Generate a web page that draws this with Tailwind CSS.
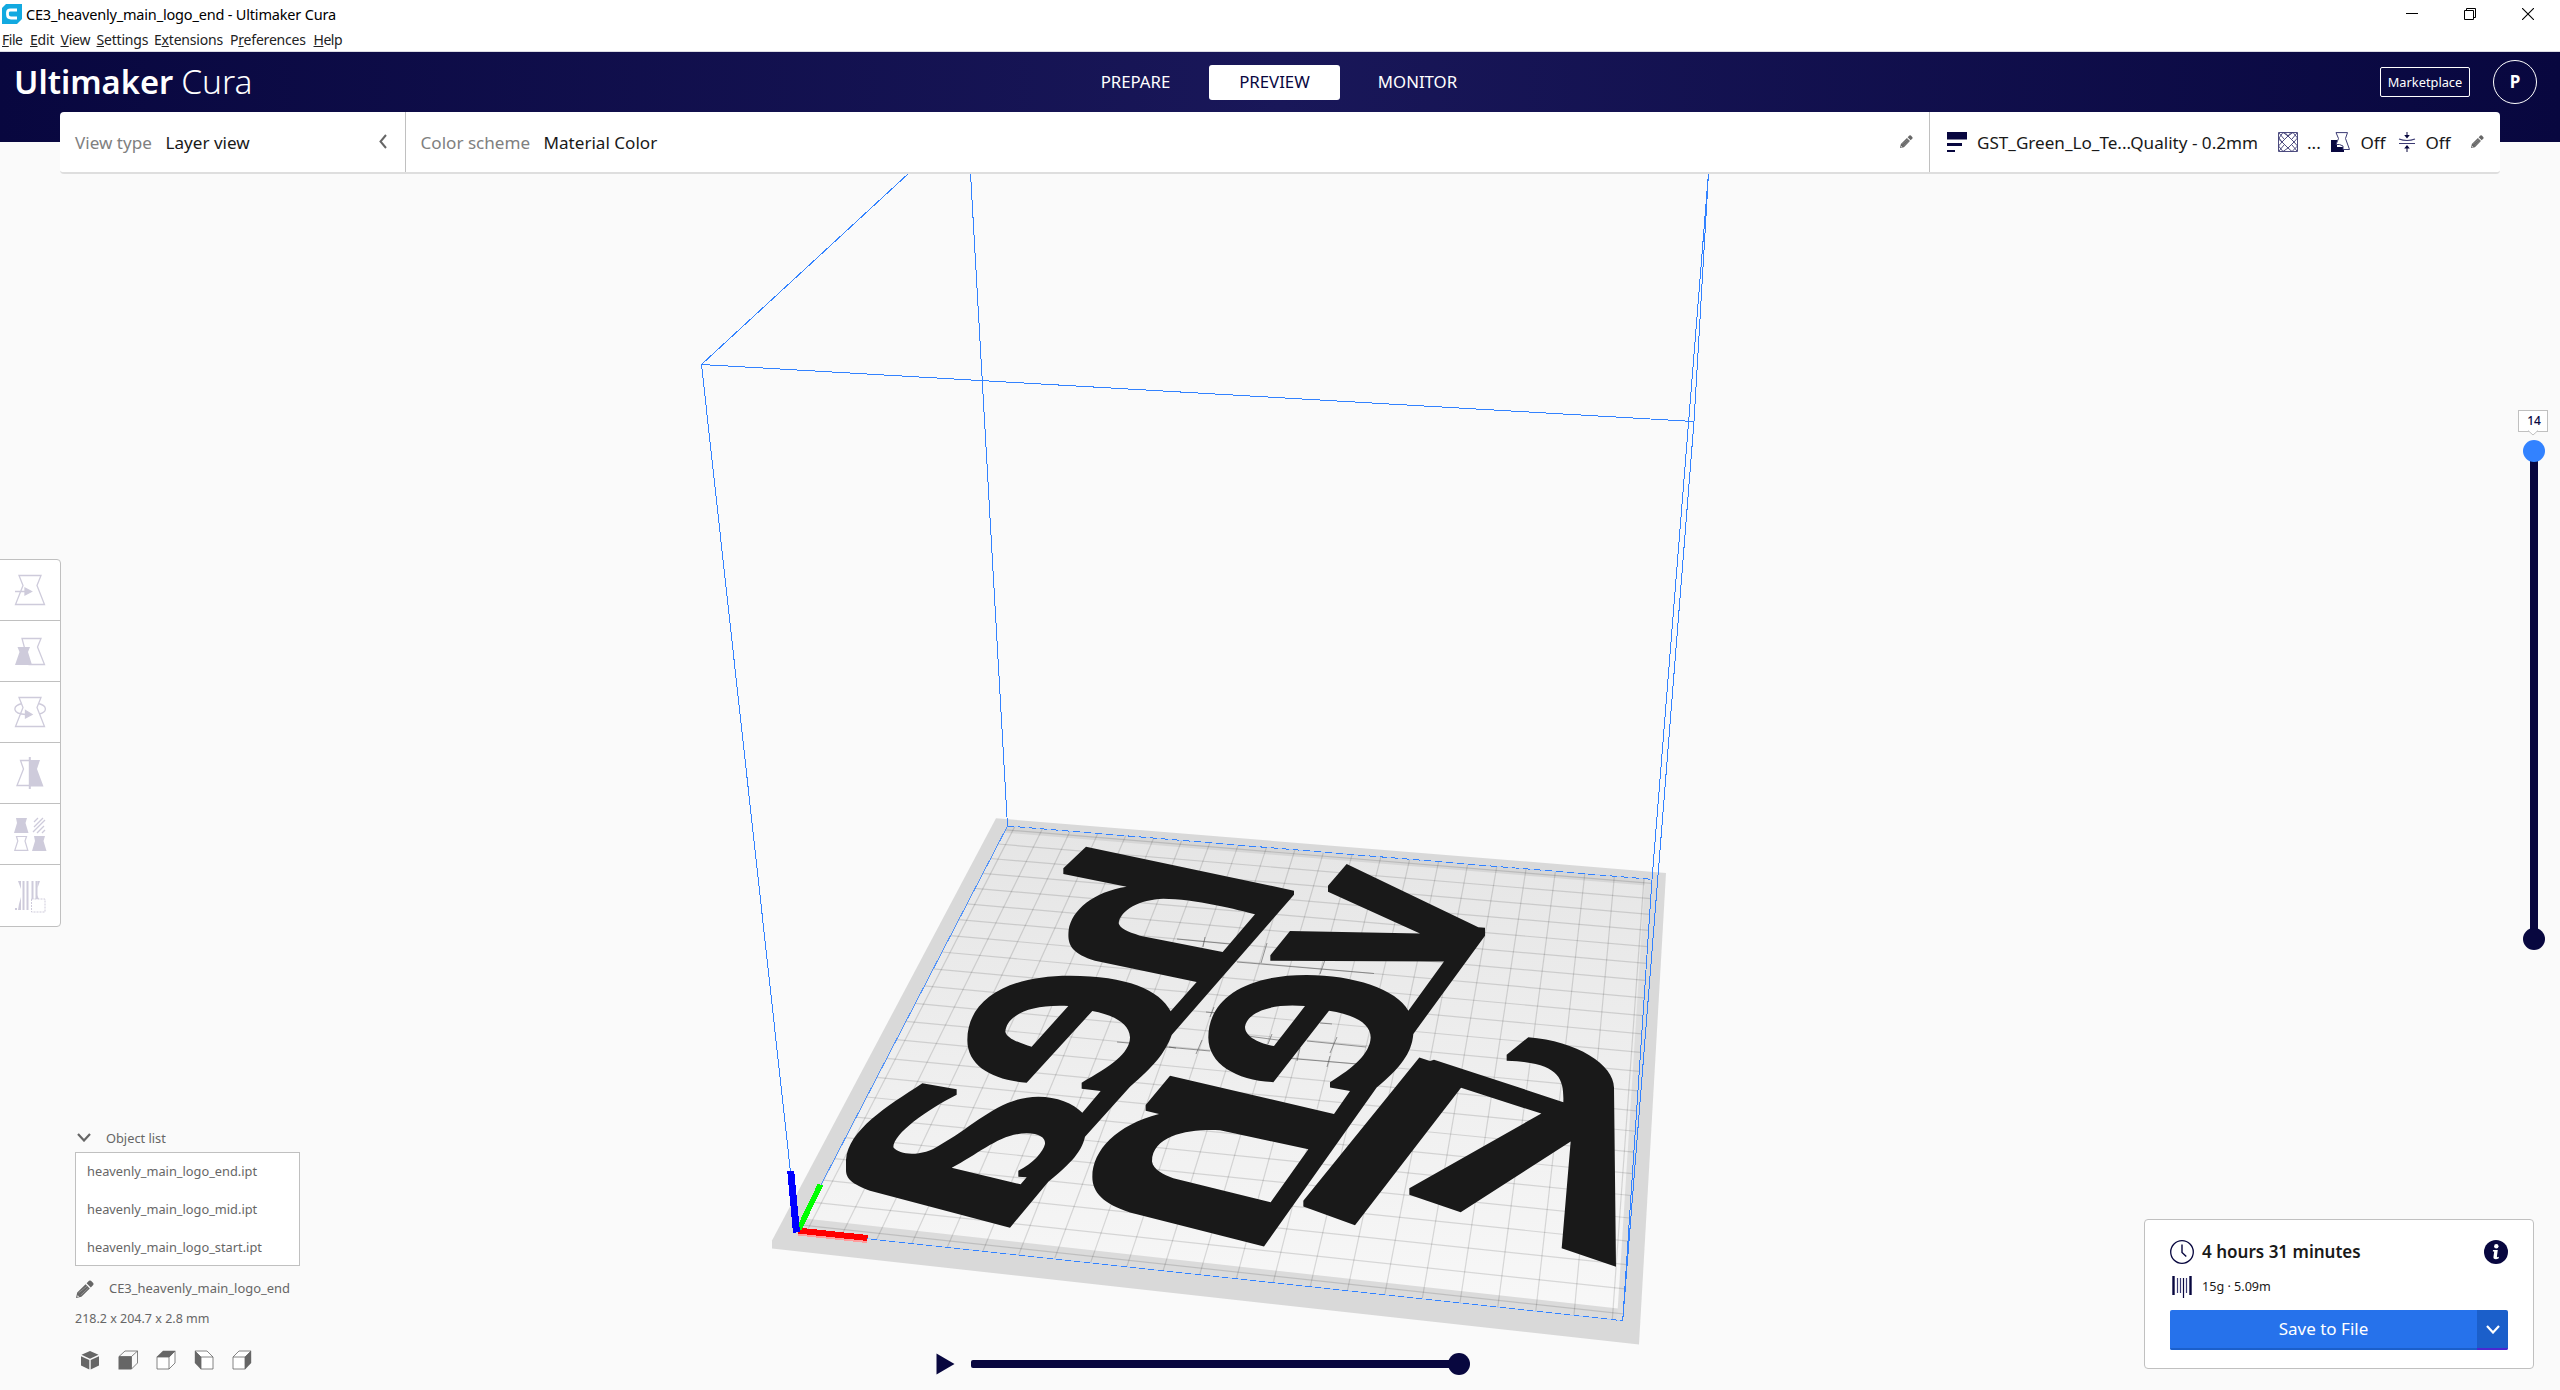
<!DOCTYPE html>
<html lang="en">
<head>
<meta charset="utf-8">
<title>CE3_heavenly_main_logo_end - Ultimaker Cura</title>
<script src="https://cdn.jsdelivr.net/npm/@tailwindcss/browser@4"></script>
</head>
<body class="w-[2560px] h-[1390px] overflow-hidden flex flex-col bg-[#fafafa] font-['Noto_Sans',sans-serif] text-[#191919] whitespace-nowrap">

<svg class="hidden">
  <symbol id="pencil" viewBox="0 0 18 18"><path d="M0 18 1.2 12.6 9.6 4.2 13.8 8.4 5.4 16.8Z M10.6 3.2 13 .8Q14 0 15 .8L17.2 3Q18 4 17.2 5L14.8 7.4Z" fill="currentColor"/><path d="M2.6 12.8 11 6.2M4.8 15 12.3 8" stroke="#fff" stroke-opacity=".35" stroke-width=".8"/><path d="M1.6 15.2l1.6 1.4-1.9.5z" fill="#fff"/></symbol>
</svg>

<!-- Title bar -->
<div class="h-[28px] shrink-0 bg-white flex items-center pl-[2px] pr-[26px] text-black">
  <svg class="w-5 h-5" viewBox="0 0 20 20"><path d="M4 0H20V15L15 20H0V4Z" fill="#12a9e0"/><path d="M15 6H8.500Q5.500 6 5.500 8.500V10.500Q5.500 14 9 14H15" fill="none" stroke="#fff" stroke-width="2.800"/></svg>
  <span class="ml-[4px] text-[14.500px] tracking-[-0.180px] leading-none">CE3_heavenly_main_logo_end - Ultimaker Cura</span>
  <div class="ml-auto flex items-center gap-[46px]">
    <svg class="w-[12px] h-[12px]" viewBox="0 0 12 12"><path d="M0 5.500H12" stroke="#000"/></svg>
    <svg class="w-[12px] h-[12px]" viewBox="0 0 12 12"><path d="M.5 2.500H9.500V11.500H.5ZM2.500 2.500V.5H11.500V9.500H9.500" fill="none" stroke="#000"/></svg>
    <svg class="w-[12px] h-[12px]" viewBox="0 0 12 12"><path d="M0 0 12 12M12 0 0 12" stroke="#000" stroke-width="1.100"/></svg>
  </div>
</div>
<!-- Menu bar -->
<div class="h-[24px] shrink-0 bg-white border-b border-[#dcdce4] flex items-center pl-[2px] text-[14px] leading-none text-[#222]">
  <span class="w-[28px] tracking-[-0.500px]"><u>F</u>ile</span>
  <span class="w-[30.500px] tracking-[-0.200px]"><u>E</u>dit</span>
  <span class="w-[36px] tracking-[-0.200px]"><u>V</u>iew</span>
  <span class="w-[57.500px] tracking-[-0.200px]"><u>S</u>ettings</span>
  <span class="w-[76px] tracking-[-0.200px]">E<u>x</u>tensions</span>
  <span class="w-[83.500px] tracking-[-0.200px]">P<u>r</u>eferences</span>
  <span class="tracking-[-0.500px]"><u>H</u>elp</span>
</div>

<!-- Header -->
<header class="relative h-[90px] shrink-0 bg-[linear-gradient(90deg,#08073f_0%,#191759_50%,#08073f_100%)] text-white">
  <div class="h-[60px] grid grid-cols-3 items-center pl-[14px] pr-[23px]">
    <div class="flex items-baseline gap-[8px] leading-none text-[32.700px]"><span class="font-semibold">Ultimaker</span><span class="font-light text-[33.500px]">Cura</span></div>
    <div class="flex items-center justify-center h-[35px] text-[16.800px] pl-[2px]">
      <span class="w-[131px] text-center mr-[8px]">PREPARE</span>
      <span class="w-[131px] h-[35px] leading-[34px] text-center bg-white text-[#08073f] rounded-[3px]">PREVIEW</span>
      <span class="w-[131px] text-center ml-[12px]">MONITOR</span>
    </div>
    <div class="flex items-center justify-end gap-[23px]">
      <span class="w-[90px] h-[30px] leading-[28px] text-center border border-white rounded-[2px] text-[12.800px]">Marketplace</span>
      <span class="w-[44px] h-[44px] leading-[41px] text-center border-[1.500px] border-white rounded-full font-bold text-[17px]">P</span>
    </div>
  </div>
</header>

<main class="relative flex-1">
  <!-- 3D scene: coordinates are window pixels -->
  <svg class="absolute left-0 top-[-142px] w-[2560px] h-[1390px]" viewBox="0 0 2560 1390">
    <defs>
      <linearGradient id="plate" x1="0" y1="826" x2="0" y2="1320" gradientUnits="userSpaceOnUse"><stop offset="0" stop-color="#e5e5e5"/><stop offset="1" stop-color="#f8f8f8"/></linearGradient>
      <clipPath id="below"><rect x="0" y="174" width="2560" height="1216"/></clipPath>
    </defs>
    <path d="M996 818.300 1666 872.900 1639 1344.600 772 1248.500V1240.500Z" fill="#d9d9d9"/>
    <path d="M1008 826 1652 879.300 1623 1320.700 798 1231Z" fill="url(#plate)"/>
    <path d="M1007.300 826 1652 879.300V886L1003.500 832.500Z" fill="#d6d6d6"/>
    <path d="M797 1231 805 1218.500 1622.700 1309V1320.700Z" fill="#dbdbdb"/>
    <path d="M1652 879.300 1645 879 1617 1320 1622.700 1320.700Z" fill="#dedede"/>
    <g id="grid" stroke="#000" stroke-opacity=".13" stroke-width="1.200"></g>
    <!-- darker grid fragments around the bed centre -->
    <g stroke="#555" stroke-opacity=".6" stroke-width="1" fill="none">
      <path d="M1177 939 1230 944M1203 947 1205 937M1237 962 1374 973.500M1261 963 1267 943M1320 974 1325 960M1117 1042 1140 1044M1169 1047 1176 1048M1196 1054 1202 1040M1206 1012 1216 1013M1210 1017 1214 1007M1240 1035 1285 1041M1268 1044 1272 1034M1307 1041 1366 1047M1330 1053 1337 1037M1297 1061 1300 1048M1285 1058 1358 1064M1327 1067 1330 1056M1320 1023 1332 1024M1166 1047 1210 1051"/>
    </g>

    <g fill="#191919">
      <g transform="translate(760 800) scale(.33333)">
        <path fill-rule="evenodd" d="M978 140 1602 272V284L1235 705C1215 760 1180 800 1110 860L975 1010C965 1060 920 1100 865 1145L750 1283 330 1172C275 1152 258 1135 258 1110V1080C265 990 380 920 487 850L590 868V884C500 930 400 1000 400 1042C420 1068 490 1070 540 1035C640 980 720 890 835 890C890 890 940 910 967 938L1022 873 965 866V848C1050 800 1110 760 1110 712C1108 670 1060 645 997 633L800 848C700 840 622 800 622 720C622 600 740 527 930 527C1100 527 1200 570 1232 634L1310 546 1005 482C930 460 922 430 926 390C935 330 1000 275 1100 260L910 222V205Z
        M1485 343C1440 330 1300 296 1210 296C1140 298 1080 330 1076 370C1080 385 1100 395 1140 407L1388 456Z
        M925 618C800 612 740 650 736 695C740 715 780 730 815 740Z
        M575 1103C660 1060 720 1000 800 1000C840 1000 857 1015 855 1032C850 1055 820 1090 775 1112V1130L800 1132 782 1153Z"/>
      </g>
      <g transform="translate(1200 800) scale(.33333 .35714)">
        <path fill-rule="evenodd" d="M-90 772 402 879 450 815 390 805V790C460 750 510 710 512 665C512 625 460 600 387 590L220 790C110 785 25 740 25 665C25 560 130 490 320 490C460 490 590 530 625 590L732 452 211 450V435L270 367 660 374 384 257V240L440 179 835 356 855 358V380L640 655C635 710 600 750 530 805L192 1250-210 1155C-290 1130-323 1100-323 1055C-323 980-250 910-123 879L-163 870V854Z
        M315 577C200 568 140 600 135 635C135 660 170 680 222 689Z
        M325 978 60 925C-20 920-144 935-144 1012C-140 1035-110 1048-80 1059L212 1126Z"/>
        <path fill-rule="evenodd" d="M658 721 690 731 702 727 1090 846C1092 780 1080 735 920 730V713L985 664C1130 675 1242 740 1242 805L1248 1307 1085 1255 1112 956 782 1154 628 1105V1087L1024 878 783 806 465 1191 310 1138V1122Z"/>
      </g>
    </g>

    <!-- build volume -->
    <g stroke="#3282ff" fill="none" shape-rendering="crispEdges" clip-path="url(#below)">
      <path d="M909 173 701.500 364.500 797 1231M701.500 364.500 1694 421.500 1708.500 173M970.500 173 1007.500 826M1708.500 173 1652 879.300M1694 421.500 1622.700 1320.700M1652 879.300 1622.700 1320.700"/>
      <path d="M1007.500 826 797 1231" stroke-opacity=".8"/>
      <path d="M1007.500 826 1652 879.300M797 1231 1622.700 1320.700" stroke="#b4cff8"/>
      <path d="M1007.500 826 1652 879.300" stroke-dasharray="7 4"/>
      <path d="M797 1231 1622.700 1320.700" stroke-dasharray="6 3.300"/>
    </g>
    <g fill="none" shape-rendering="crispEdges">
      <path d="M798 1234 867 1241.500" stroke="#ff9c9c" stroke-width="3"/>
      <path d="M798 1230.500 867.500 1238" stroke="#f00" stroke-width="6"/>
      <path d="M799 1229 820.500 1184.500" stroke="#0f0" stroke-width="5.500"/>
      <path d="M790.700 1171 796.500 1232.500" stroke="#00f" stroke-width="7"/>
    </g>
  </svg>

  <!-- Stage menu -->
  <div class="absolute left-[60px] top-[-30px] w-[2440px] h-[62px] bg-white border-b-2 border-[#dedede] rounded-[4px] flex text-[17.100px] leading-[24px]">
    <div class="w-[346px] border-r border-[#c0c0c0] flex items-center pl-[15px] pr-[18px]">
      <span class="text-[#808080] w-[90.500px] mt-px">View type</span>
      <span class="mt-px">Layer view</span>
      <svg class="ml-auto w-[8px] h-[15px] mb-[2px]" viewBox="0 0 8 15"><path d="M7 1 1.500 7.500 7 14" fill="none" stroke="#666" stroke-width="2"/></svg>
    </div>
    <div class="w-[1524px] border-r border-[#c0c0c0] flex items-center pl-[14.500px] pr-[16px]">
      <span class="text-[#808080] w-[123px] mt-px">Color scheme</span>
      <span class="mt-px">Material Color</span>
      <svg class="ml-auto w-[13px] h-[13px] text-[#666] mb-px"><use href="#pencil"/></svg>
    </div>
    <div class="flex-1 flex items-center pl-[17px] pr-[16px] text-[#08073f]">
      <svg class="w-[20px] h-[20px]" viewBox="0 0 20 20" fill="#08073f"><path d="M0 0H20V7.500H0ZM0 11H15V14H0ZM0 18H8V20H0Z"/></svg>
      <span class="text-[#191919] ml-[10px] mt-px w-[301px]">GST_Green_Lo_Te...Quality - 0.2mm</span>
      <svg class="w-[20px] h-[20px]" viewBox="0 0 20 20"><path d="M.5.5H19.500V19.500H.5Z M10 4 16 10 10 16 4 10ZM5 .5 1 6 4 10 .5 14M5 .5 10 4 15 .5M15 .5 19.500 6 16 10 19.500 14 14 19.500 10 16 5 19.500 .5 14M10 4 7 .5M4 10 .5 7M10 4 13 .5M1 1 6 7M19 1 14 7M1 19 6 13M19 19 14 13" fill="none" stroke="#3b3a73" stroke-width=".9"/></svg>
      <span class="text-[#191919] ml-[9px] mt-px w-[24px]">...</span>
      <svg class="w-[20px] h-[20px]" viewBox="0 0 20 20"><path d="M0 8H6V15H13V20H0Z" fill="#08073f"/><path d="M5 .6H16.500L14.500 6.500 18.500 17.500H12V14L8.500 12.500H5L7.500 6.500Z" fill="#fff" stroke="#3b3a73"/></svg>
      <span class="text-[#191919] ml-[9.500px] mt-px w-[37px]">Off</span>
      <svg class="w-[18px] h-[20px]" viewBox="0 0 18 20"><path d="M1 7Q9 10 17 7M1 11.500H17" fill="none" stroke="#3b3a73" stroke-width="1.200"/><path d="M9 6.500 6.200 3H8.500V0H9.500V3H11.800ZM9 13 6.200 16.500H8.500V20H9.500V16.500H11.800Z" fill="#08073f"/></svg>
      <span class="text-[#191919] ml-[10px] mt-px">Off</span>
      <svg class="ml-auto w-[13px] h-[13px] text-[#666] mb-px"><use href="#pencil"/></svg>
    </div>
  </div>

  <!-- Toolbar -->
  <div class="absolute left-[-1px] top-[417px] w-[62px] bg-white border border-[#c0c0c0] rounded-r-[4px] divide-y divide-[#c0c0c0] text-[#cecbdb]">
    <div class="h-[61px] flex items-center justify-center"><svg class="w-[32px] h-[32px]" viewBox="0 0 32 32" fill="none" stroke="currentColor" stroke-width="1.300"><path d="M5 1.500H27L23 11.500 30.500 30.500H1.500L9 11.500ZM1 17.500H12"/><path d="M11 14 17.500 17.500 11 21Z" fill="currentColor"/></svg></div>
    <div class="h-[61px] flex items-center justify-center"><svg class="w-[32px] h-[32px]" viewBox="0 0 32 32"><path d="M8 3.500H27L23.500 12 30.500 29.500H15L8 3.500Z" fill="none" stroke="currentColor" stroke-width="1.300"/><path d="M3.500 12H16L14 17 18 30H1L5.500 17Z" fill="currentColor"/></svg></div>
    <div class="h-[61px] flex items-center justify-center"><svg class="w-[32px] h-[32px]" viewBox="0 0 32 32" fill="none" stroke="currentColor" stroke-width="1.300"><path d="M5 1.500H27L23 11.500 30.500 30.500H1.500L9 11.500ZM8 7.500C-2 10-2 18 12 18.500M24.500 7.500C34 10 33 16 25.500 18"/><path d="M11.500 14.500 18 18.500 11.500 22Z" fill="currentColor"/></svg></div>
    <div class="h-[61px] flex items-center justify-center"><svg class="w-[32px] h-[32px]" viewBox="0 0 32 32"><path d="M16 3.500H6.500L9.500 12 3 28.500H16" fill="none" stroke="currentColor" stroke-width="1.300"/><path d="M16 3H26L23 12 29.500 29.500H16Z" fill="currentColor"/><path d="M15.800 0V32" stroke="currentColor" stroke-width="2"/></svg></div>
    <div class="h-[61px] flex items-center justify-center"><svg class="w-[34px] h-[34px]" viewBox="0 0 34 34" fill="currentColor"><path d="M3 1H14L12.500 6 15.500 16H1L4 6ZM21 19H32L30.500 24 33.500 34H19L22 24Z"/><path d="M3.500 19.500H13.500L12 24 14.800 33.300H1.800L4.800 24Z" fill="none" stroke="currentColor" stroke-width="1.200"/><path d="M21 5 25 1M21 10 30 1M20 15 32 3M24 16 31 9M29 16 32 13" stroke="currentColor" stroke-width="1.300"/></svg></div>
    <div class="h-[61px] flex items-center justify-center"><svg class="w-[32px] h-[34px]" viewBox="0 0 32 34"><path d="M10.500 2V31M14.500 2V31M19.500 2V20M23.500 2V20" stroke="currentColor" stroke-width="2" transform="translate(-1 0)"/><path d="M4 2H7V10ZM26 2H23.500V9ZM7 18V31H4L5 25ZM22 14 25 20H22ZM1 29H3V31H1Z" fill="currentColor"/><path d="M17.500 20H31V33H17.500Z" fill="#fff" stroke="currentColor" stroke-dasharray="2 1"/></svg></div>
  </div>

  <!-- Object list -->
  <section class="absolute left-[75px] top-[984px] text-[#666] text-[12.800px]">
    <div class="h-[26px] flex items-center">
      <svg class="w-[14px] h-[9px] ml-[2px] mt-[-4px]" viewBox="0 0 14 9"><path d="M1 1 7 7.500 13 1" fill="none" stroke="currentColor" stroke-width="2.200"/></svg>
      <span class="ml-[15px]">Object list</span>
    </div>
    <div class="w-[225px] h-[114px] bg-white border border-[#c0c0c0] pl-[11px] leading-[38px]">
      <div class="-mt-px">heavenly_main_logo_end.ipt</div>
      <div>heavenly_main_logo_mid.ipt</div>
      <div>heavenly_main_logo_start.ipt</div>
    </div>
    <div class="flex items-center h-[46px] pl-[1px]">
      <svg class="w-[18px] h-[18px]"><use href="#pencil"/></svg>
      <span class="ml-[15px] text-[12.950px]">CE3_heavenly_main_logo_end</span>
    </div>
    <div class="text-[12.500px] leading-[16px] -mt-px">218.2 x 204.7 x 2.8 mm</div>
    <div class="flex gap-[18px] pl-[5px] mt-[23px]">
      <svg class="w-5 h-5" viewBox="0 0 20 20"><path d="M10 1 18.500 4.800 10 8.800 1.500 4.800ZM1 6.200 9.300 10V19.500L1 15.500ZM19 6.200 10.700 10V19.500L19 15.500Z" fill="currentColor"/></svg>
      <svg class="w-5 h-5" viewBox="0 0 20 20"><path d="M1 6.500 7 1H19.500V13L13.500 19V6.500H1M13.500 6.500 19.500 1" fill="none" stroke="currentColor" stroke-width=".8"/><path d="M.5 6.500H13.500V19.500H.5Z" fill="currentColor"/></svg>
      <svg class="w-5 h-5" viewBox="0 0 20 20"><path d="M1 7H13V19H1ZM13 7 19 1V13L13 19" fill="#fff" stroke="currentColor" stroke-width=".8"/><path d="M.5 7 7 .8H19.500L13.500 7Z" fill="currentColor"/></svg>
      <svg class="w-5 h-5" viewBox="0 0 20 20"><path d="M7 7H19V19H7ZM7 7 1 1H13L19 7" fill="#fff" stroke="currentColor" stroke-width=".8"/><path d="M.8.8 7 7V19.500L.8 13Z" fill="currentColor"/></svg>
      <svg class="w-5 h-5" viewBox="0 0 20 20"><path d="M1 7H13V19H1ZM1 7 7 1H19L13 7" fill="#fff" stroke="currentColor" stroke-width=".8"/><path d="M19.200.8 13 7V19.500L19.200 13Z" fill="currentColor"/></svg>
    </div>
  </section>

  <!-- Layer slider -->
  <div class="absolute left-[2518px] top-[268px] w-[30px] flex flex-col items-center">
    <div class="relative w-[30px] h-[22px] bg-white border border-[#c0c0c0] text-center text-[12px] leading-[20px] pl-[2px] font-medium text-[#08073f]">14
      <svg class="absolute left-[9px] top-[19px] w-[10px] h-[6px]" viewBox="0 0 10 6"><path d="M0 .5 5 5 10 .5" fill="#fff" stroke="#c0c0c0"/></svg>
    </div>
    <div class="relative z-10 mt-[8px] ml-[2px] w-[22px] h-[22px] rounded-full bg-[#3282ff]"></div>
    <div class="ml-[2px] w-[8px] h-[468px] -my-px bg-[#08073f]"></div>
    <div class="ml-[2px] w-[22px] h-[22px] rounded-full bg-[#08073f]"></div>
  </div>

  <!-- Path slider -->
  <div class="absolute left-[936px] top-[1211px] flex items-center h-[22px]">
    <svg class="w-[19px] h-[22px]" viewBox="0 0 19 22"><path d="M.5 .5 18.500 11 .5 21.500Z" fill="#08073f"/></svg>
    <div class="ml-[16px] w-[488px] h-[8px] rounded-l-[2px] bg-[#08073f]"></div>
    <div class="-ml-[11px] w-[22px] h-[22px] rounded-full bg-[#08073f]"></div>
  </div>

  <!-- Output card -->
  <section class="absolute left-[2144px] top-[1077px] w-[390px] h-[150px] bg-white border border-[#c0c0c0] rounded-[4px] pl-[25px] pr-[25px] pt-[20px]">
    <div class="flex items-center h-[24px]">
      <svg class="w-[24px] h-[24px]" viewBox="0 0 24 24"><circle cx="12" cy="12" r="11.300" fill="none" stroke="#08073f" stroke-width="1.300"/><path d="M12 4.500V12.500L16.300 16.500" fill="none" stroke="#08073f" stroke-width="1.400"/></svg>
      <span class="ml-[8px] text-[17.050px] font-semibold">4 hours 31 minutes</span>
      <svg class="ml-auto w-[24px] h-[24px]" viewBox="0 0 24 24"><circle cx="12" cy="12" r="12" fill="#08073f"/><g fill="#fff"><circle cx="12.300" cy="6.300" r="2.200"/><path d="M9 10H13.800L12.900 16.500Q12.900 17.600 14.800 16.800V18.300Q12 20 10 18.800 9.200 18.200 9.500 16.500L10.200 11.500H8.800Z"/></g></svg>
    </div>
    <div class="flex items-center h-[24px] mt-[11px]">
      <svg class="w-[20px] h-[24px] ml-[2px]" viewBox="0 0 20 24"><path d="M1.500 1V20M18.500 1V20" stroke="#08073f" stroke-width="2.400"/><path d="M5.500 3V18M8.500 3V18M14.500 3V18" stroke="#3b3a73" stroke-width="1.200"/><path d="M11.500 3V23" stroke="#08073f" stroke-width="1.200"/></svg>
      <span class="ml-[10px] text-[12.600px]">15g · 5.09m</span>
    </div>
    <div class="flex h-[40px] mt-[11px] rounded-[2px] overflow-hidden text-white">
      <div class="w-[307px] bg-[#2672eb] border-b-2 border-[#1b5fca] text-center text-[17px] leading-[38px]">Save to File</div>
      <div class="flex-1 bg-[#1b5fca] border-b-2 border-[#4a28d0] flex items-center justify-center"><svg class="w-[14px] h-[9px]" viewBox="0 0 14 9"><path d="M1 1 7 7.500 13 1" fill="none" stroke="#fff" stroke-width="2.200"/></svg></div>
    </div>
  </section>
</main>

<script>
// Projects the 10 mm bed grid onto the plate's four screen corners.
const [p00, p10, p11, p01] = [[1007.3, 826], [1652, 879.3], [1622.7, 1320.7], [797, 1231]];
const dx1 = p10[0] - p11[0], dx2 = p01[0] - p11[0], sx = p00[0] - p10[0] + p11[0] - p01[0];
const dy1 = p10[1] - p11[1], dy2 = p01[1] - p11[1], sy = p00[1] - p10[1] + p11[1] - p01[1];
const det = dx1 * dy2 - dx2 * dy1;
const g = (sx * dy2 - dx2 * sy) / det, h = (dx1 * sy - sx * dy1) / det;
const project = (u, v) => {
  const w = g * u + h * v + 1;
  return [0, 1].map(i => ((p10[i] - p00[i] + g * p10[i]) * u + (p01[i] - p00[i] + h * p01[i]) * v + p00[i]) / w);
};
const grid = document.getElementById('grid');
const add = (a, b) => {
  const l = document.createElementNS('http://www.w3.org/2000/svg', 'line');
  l.setAttribute('x1', a[0]); l.setAttribute('y1', a[1]);
  l.setAttribute('x2', b[0]); l.setAttribute('y2', b[1]);
  grid.appendChild(l);
};
for (let i = 0; i <= 22; i++) {
  const t = (i + 0.27) / 22.54;
  add(project(t, 0), project(t, 1));
  add(project(0, t), project(1, t));
}
</script>
</body>
</html>
